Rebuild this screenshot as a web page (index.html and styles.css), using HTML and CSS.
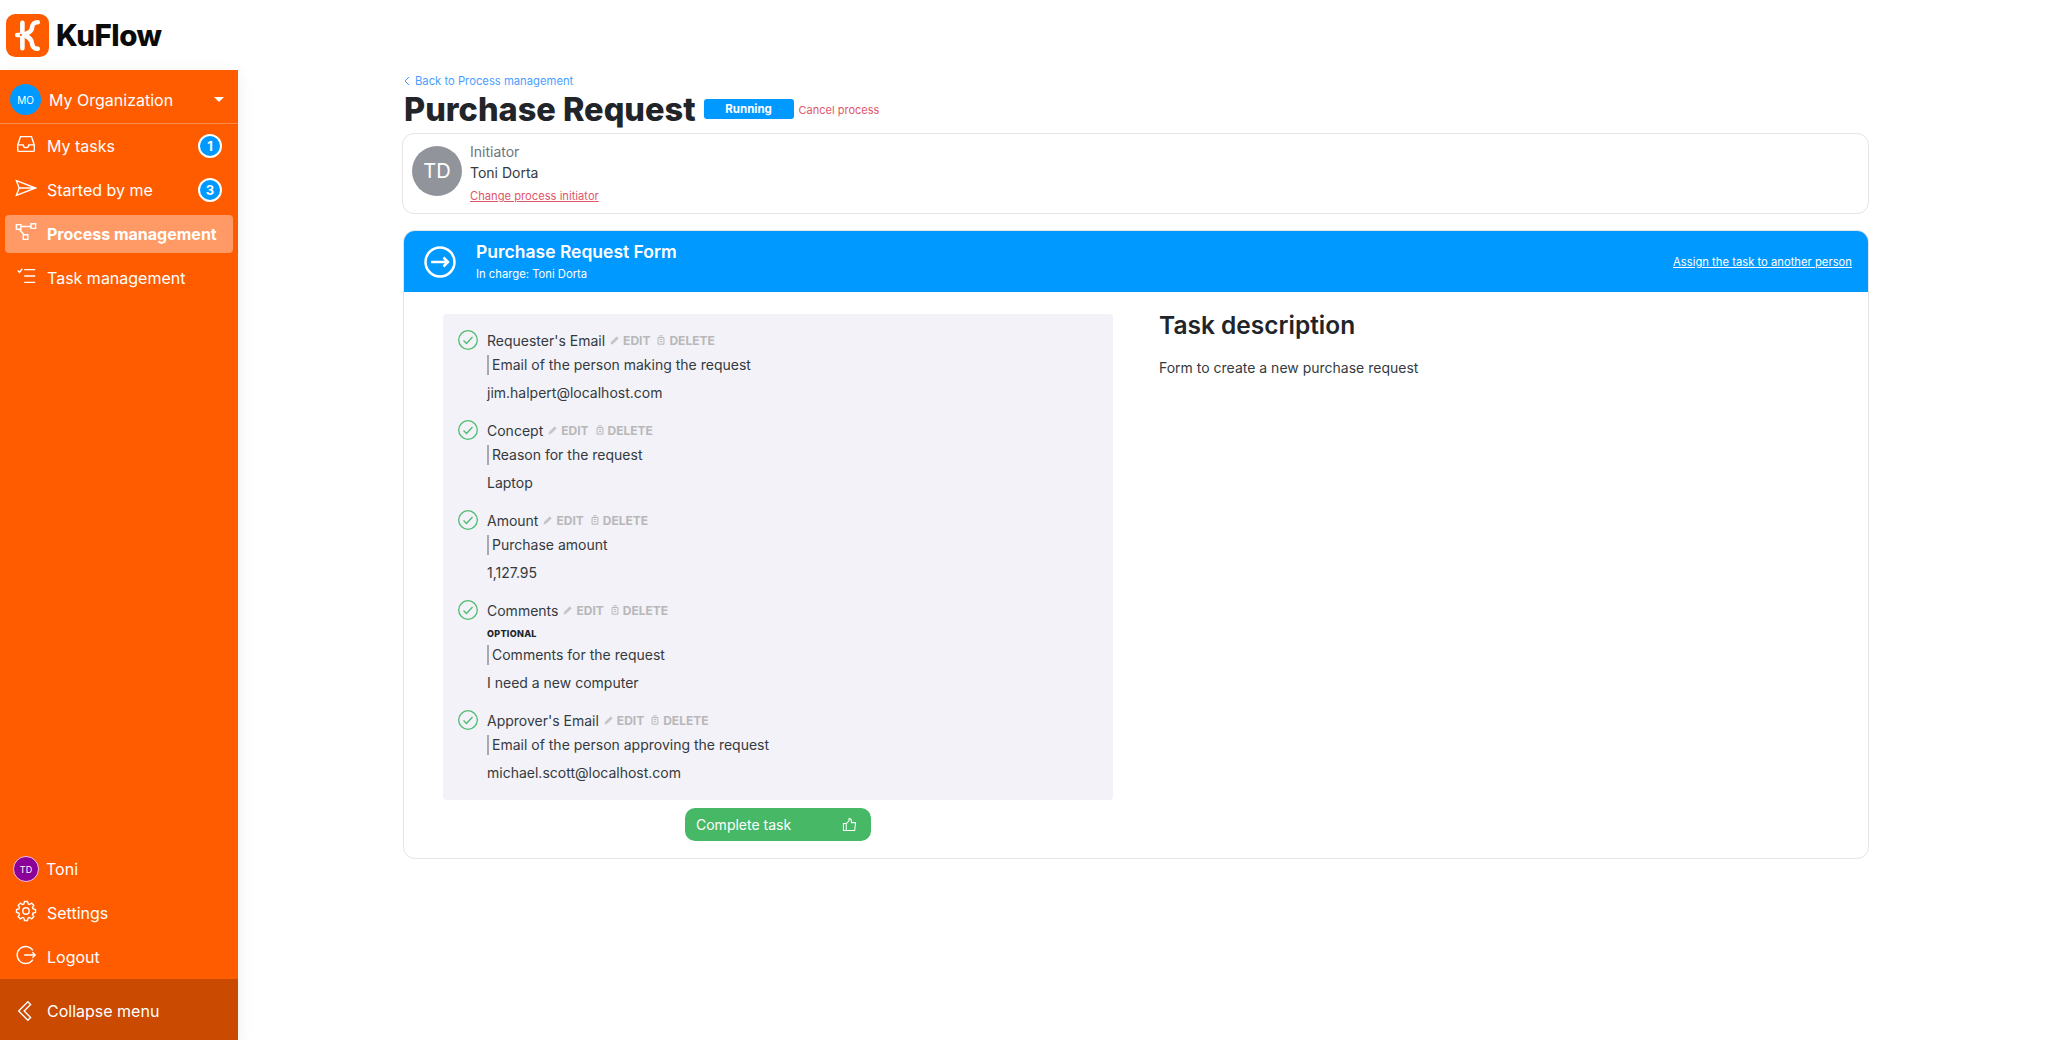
FILE: index.html
```html
<!DOCTYPE html>
<html lang="en">
<head>
<meta charset="utf-8">
<title>KuFlow</title>
<link rel="stylesheet" href="styles.css">
</head>
<body>
<div class="app">
  <aside class="side">
    <div class="brand">
      <svg class="logo" viewBox="0 0 42 42"><rect width="42" height="42" rx="9" fill="#ff5c00"/><path d="M16 8.500v25M31 8c-6 0-5 4-6 7-1 3-5 4-7 5.500 2 1.500 6 2.500 7 6.500 1 3 0 7 6 7M11 20.500h5" fill="none" stroke="#fff" stroke-width="4.500" stroke-linecap="round"/><circle cx="14.500" cy="20.500" r="1.100" fill="#ff5c00"/></svg>
      <span class="brand-name">KuFlow</span>
    </div>
    <nav class="menu">
      <div class="org"><span class="org-av">MO</span><span class="org-name">My Organization</span><span class="caret"></span></div>
      <div class="nav-list">
        <a class="nav"><svg class="ico" viewBox="0 0 24 24"><path d="M6 4h12l3 9v6a1 1 0 0 1-1 1H4a1 1 0 0 1-1-1v-6zM3 13h6c0 2 1.500 3 3 3s3-1 3-3h6"/></svg><span class="lbl">My tasks</span><span class="count">1</span></a>
        <a class="nav"><svg class="ico" viewBox="0 0 24 24"><path d="M1.500 4l21 8-21 8 3-8-3-8zM4.500 12h18"/></svg><span class="lbl">Started by me</span><span class="count">3</span></a>
        <a class="nav active"><svg class="ico" viewBox="0 0 24 24"><path d="M1.500 4h5v5h-5zM17.500 3h5v5h-5zM9 15h5v5H9zM6.500 6h11M4.500 9l5.500 6"/></svg><span class="lbl">Process management</span></a>
        <a class="nav"><svg class="ico" viewBox="0 0 24 24"><path d="M10 5h12M10 12h12M10 19h12M3 6l2 2 3-4"/></svg><span class="lbl">Task management</span></a>
      </div>
      <div class="nav-list bottom">
        <a class="nav"><span class="user-av">TD</span><span class="lbl">Toni</span></a>
        <a class="nav"><svg class="ico" viewBox="0 0 24 24"><circle cx="12" cy="12" r="3.500"/><path d="M19.650 9.660 22.370 10.360 22.370 13.640 19.650 14.340 19.060 15.760 20.490 18.170 18.170 20.490 15.760 19.060 14.340 19.650 13.640 22.370 10.360 22.370 9.660 19.650 8.240 19.060 5.830 20.490 3.510 18.170 4.940 15.760 4.350 14.340 1.630 13.640 1.630 10.360 4.350 9.660 4.940 8.240 3.510 5.830 5.830 3.510 8.240 4.940 9.660 4.350 10.360 1.630 13.640 1.630 14.340 4.350 15.760 4.940 18.170 3.510 20.490 5.830 19.060 8.240z"/></svg><span class="lbl">Settings</span></a>
        <a class="nav"><svg class="ico" viewBox="0 0 24 24"><path d="M19.500 7a9.300 9.300 0 1 0 0 10M10 12h12M19 9l3 3-3 3"/></svg><span class="lbl">Logout</span></a>
      </div>
      <a class="collapse"><svg class="ico" viewBox="0 0 24 24"><path d="M14 2l3 3-7 7 7 7-3 3-10-10z"/></svg><span class="lbl">Collapse menu</span></a>
    </nav>
  </aside>

  <main class="main">
    <a class="back"><svg class="chev" viewBox="0 0 8 10"><path d="M6 1L2 5l4 4"/></svg>Back to Process management</a>
    <div class="title-row">
      <h1 class="title">Purchase Request</h1>
      <span class="badge">Running</span>
      <a class="cancel">Cancel process</a>
    </div>
    <section class="initiator">
      <div class="ini-av">TD</div>
      <div class="ini-text">
        <div class="ini-label">Initiator</div>
        <div class="ini-name">Toni Dorta</div>
        <a class="ini-change">Change process initiator</a>
      </div>
    </section>
    <section class="task">
      <header class="task-head">
        <svg class="task-ico" viewBox="0 0 32 32"><circle cx="16" cy="16" r="14.500"/><path d="M7 16h17M19.500 11.500l4.500 4.500-4.500 4.500"/></svg>
        <div class="task-titles">
          <div class="task-name">Purchase Request Form</div>
          <div class="task-charge">In charge: Toni Dorta</div>
        </div>
        <a class="assign">Assign the task to another person</a>
      </header>
      <div class="task-body">
        <div class="form-col">
          <div class="panel">
            <div class="field">
              <svg class="check" viewBox="0 0 20 20"><circle cx="10" cy="10" r="9.300"/><path d="M5.500 10.500l3 3 6-6.500"/></svg>
              <div class="field-main">
                <div class="field-head"><span class="fname">Requester's Email</span><span class="act"><svg class="mini pen" viewBox="0 0 12 12"><path d="M1 11l1-3 6-6 2 2-6 6z"/></svg>EDIT</span><span class="act"><svg class="mini" viewBox="0 0 12 12"><path d="M2.500 3h7v8h-7zM4 1h4M4.500 5.500h3M4.500 8h3"/></svg>DELETE</span></div>
                <div class="hint">Email of the person making the request</div>
                <div class="value">jim.halpert@localhost.com</div>
              </div>
            </div>
            <div class="field">
              <svg class="check" viewBox="0 0 20 20"><circle cx="10" cy="10" r="9.300"/><path d="M5.500 10.500l3 3 6-6.500"/></svg>
              <div class="field-main">
                <div class="field-head"><span class="fname">Concept</span><span class="act"><svg class="mini pen" viewBox="0 0 12 12"><path d="M1 11l1-3 6-6 2 2-6 6z"/></svg>EDIT</span><span class="act"><svg class="mini" viewBox="0 0 12 12"><path d="M2.500 3h7v8h-7zM4 1h4M4.500 5.500h3M4.500 8h3"/></svg>DELETE</span></div>
                <div class="hint">Reason for the request</div>
                <div class="value">Laptop</div>
              </div>
            </div>
            <div class="field">
              <svg class="check" viewBox="0 0 20 20"><circle cx="10" cy="10" r="9.300"/><path d="M5.500 10.500l3 3 6-6.500"/></svg>
              <div class="field-main">
                <div class="field-head"><span class="fname">Amount</span><span class="act"><svg class="mini pen" viewBox="0 0 12 12"><path d="M1 11l1-3 6-6 2 2-6 6z"/></svg>EDIT</span><span class="act"><svg class="mini" viewBox="0 0 12 12"><path d="M2.500 3h7v8h-7zM4 1h4M4.500 5.500h3M4.500 8h3"/></svg>DELETE</span></div>
                <div class="hint">Purchase amount</div>
                <div class="value">1,127.95</div>
              </div>
            </div>
            <div class="field">
              <svg class="check" viewBox="0 0 20 20"><circle cx="10" cy="10" r="9.300"/><path d="M5.500 10.500l3 3 6-6.500"/></svg>
              <div class="field-main">
                <div class="field-head"><span class="fname">Comments</span><span class="act"><svg class="mini pen" viewBox="0 0 12 12"><path d="M1 11l1-3 6-6 2 2-6 6z"/></svg>EDIT</span><span class="act"><svg class="mini" viewBox="0 0 12 12"><path d="M2.500 3h7v8h-7zM4 1h4M4.500 5.500h3M4.500 8h3"/></svg>DELETE</span></div>
                <div class="optional">OPTIONAL</div>
                <div class="hint">Comments for the request</div>
                <div class="value">I need a new computer</div>
              </div>
            </div>
            <div class="field">
              <svg class="check" viewBox="0 0 20 20"><circle cx="10" cy="10" r="9.300"/><path d="M5.500 10.500l3 3 6-6.500"/></svg>
              <div class="field-main">
                <div class="field-head"><span class="fname">Approver's Email</span><span class="act"><svg class="mini pen" viewBox="0 0 12 12"><path d="M1 11l1-3 6-6 2 2-6 6z"/></svg>EDIT</span><span class="act"><svg class="mini" viewBox="0 0 12 12"><path d="M2.500 3h7v8h-7zM4 1h4M4.500 5.500h3M4.500 8h3"/></svg>DELETE</span></div>
                <div class="hint">Email of the person approving the request</div>
                <div class="value">michael.scott@localhost.com</div>
              </div>
            </div>
          </div>
          <button class="complete"><span>Complete task</span><svg class="thumb" viewBox="0 0 16 16"><path d="M1.500 7h3v7.500h-3zM4.500 7l3-3V1.500c1.500 0 2.500 1 2.500 2.500v2h4.500l-1 8.500h-9"/></svg></button>
        </div>
        <div class="desc-col">
          <h2 class="desc-title">Task description</h2>
          <p class="desc-text">Form to create a new purchase request</p>
        </div>
      </div>
    </section>
  </main>
</div>
</body>
</html>
```
FILE: styles.css
```css
* { box-sizing: border-box; }
html, body { margin: 0; height: 100%; }
body { font-family: Inter, "Liberation Sans", sans-serif; color: #212529; background: #fff; font-size: 14px; }
a { text-decoration: none; }
.app { display: flex; height: 1040px; overflow: hidden; }

.side { width: 238px; flex: none; display: flex; flex-direction: column; }
.brand { height: 70px; display: flex; align-items: center; gap: 7px; padding-left: 6px; }
.logo { width: 43px; height: 43px; }
.brand-name { font-size: 29.500px; font-weight: 800; color: #0b0b0b; letter-spacing: -0.5px; }
.menu { flex: 1; background: #ff5c00; color: #fff; display: flex; flex-direction: column; box-shadow: 0 4px 16px rgba(0, 0, 0, 0.08); }
.org { height: 54px; display: flex; align-items: center; padding: 6px 14px 0 10px; border-bottom: 1px solid #ff8a47; font-size: 16px; }
.org-av { width: 31px; height: 31px; border-radius: 50%; background: #0099ff; font-size: 10px; display: flex; align-items: center; justify-content: center; margin-right: 8px; }
.org-name { flex: 1; }
.caret { border: 5px solid transparent; border-top: 5px solid #fff; border-bottom: 0; }
.nav-list { padding: 0 5px; display: flex; flex-direction: column; gap: 6px; margin-top: 3px; }
.nav { height: 38px; display: flex; align-items: center; border-radius: 4px; padding: 0 10px; font-size: 16px; color: #fff; }
.nav.active { background: #ff9966; font-weight: 700; }
.ico { width: 22px; height: 22px; margin-right: 10px; fill: none; stroke: #fff; stroke-width: 1.500; flex: none; position: relative; top: -2px; }
.lbl { flex: 1; white-space: nowrap; }
.count { width: 24px; height: 24px; border-radius: 50%; background: #0099ff; border: 2px solid #fff; font-size: 13px; font-weight: 700; display: flex; align-items: center; justify-content: center; margin-right: 1px; }
.bottom { margin-top: auto; margin-bottom: 3px; }
.user-av { width: 26px; height: 26px; margin: 0 7px 0 -2px; border-radius: 50%; background: #8b0099; border: 1px solid #f0c0e0; font-size: 9px; display: flex; align-items: center; justify-content: center; flex: none; }
.collapse { height: 61px; background: #c94a00; display: flex; align-items: center; padding: 2px 0 0 15px; font-size: 16px; color: #fff; }
.collapse .ico { top: 0; }

.main { flex: 1; padding: 73px 179px 0 164px; min-width: 0; }
.back { display: flex; align-items: center; font-size: 11.250px; line-height: 16px; color: #4a9eff; margin-left: 1px; }
.chev { width: 8px; height: 10px; margin-right: 4px; fill: none; stroke: #4a9eff; stroke-width: 1; }
.title-row { display: flex; align-items: center; height: 36px; margin-top: 3px; }
.title { font-size: 32.500px; font-weight: 800; margin: 0 8px 0 2px; line-height: 36px; }
.badge { width: 90px; height: 20px; border-radius: 3px; background: #0099ff; color: #fff; font-size: 11.500px; font-weight: 700; display: flex; align-items: center; justify-content: center; margin-right: 5px; position: relative; top: -1px; }
.cancel { font-size: 11px; color: #e0566a; }

.initiator { margin-top: 5px; height: 81px; border: 1px solid #e4e4e4; border-radius: 12px; display: flex; padding: 12px 9px; }
.ini-av { width: 50px; height: 50px; border-radius: 50%; background: #92949c; color: #fff; font-size: 20px; display: flex; align-items: center; justify-content: center; margin-right: 8px; }
.ini-label { font-size: 14px; line-height: 18px; color: #6c757d; margin-top: -3px; }
.ini-name { font-size: 14px; line-height: 24px; color: #343a40; }
.ini-change { display: block; font-size: 11.200px; line-height: 16px; color: #e0566a; text-decoration: underline; margin-top: 3px; }

.task { margin: 16px 0 0 1px; height: 629px; border: 1px solid #e4e4e4; border-radius: 12px; overflow: hidden; }
.task-head { height: 61px; background: #0099ff; color: #fff; display: flex; align-items: center; padding: 0 16px 0 20px; }
.task-ico { width: 32px; height: 32px; fill: none; stroke: #fff; stroke-width: 2.500; margin-right: 20px; }
.task-titles { flex: 1; }
.task-name { font-size: 17.500px; font-weight: 600; line-height: 24px; }
.task-charge { font-size: 11.250px; line-height: 20px; }
.assign { font-size: 11.250px; color: #fff; text-decoration: underline; }
.task-body { display: flex; padding: 22px 39px 0; gap: 46px; }
.form-col { width: 670px; flex: none; display: flex; flex-direction: column; align-items: center; }
.panel { width: 100%; background: #f2f2f8; border-radius: 4px; padding: 16px 16px 17px 15px; }
.field { display: flex; margin-bottom: 17px; }
.field:last-child { margin-bottom: 0; }
.check { width: 20px; height: 20px; fill: none; stroke: #4fbb6e; stroke-width: 1.300; margin-right: 9px; flex: none; }
.field-head { display: flex; align-items: center; height: 20px; font-size: 14px; }
.fname { margin-right: 5px; color: #343a40; }
.act { font-size: 12px; font-weight: 700; color: #b8b8b8; margin-right: 6px; display: flex; align-items: center; }
.mini { width: 10px; height: 10px; fill: none; stroke: #b8b8b8; stroke-width: 1.200; margin-right: 3px; }
.pen { fill: #c4c4c4; stroke-width: 0.500; }
.optional { font-size: 9px; font-weight: 800; line-height: 12px; margin: 8px 0 2px; letter-spacing: 0.3px; }
.hint { margin-top: 5px; border-left: 2px solid #a9a9b0; padding-left: 3px; font-size: 14px; line-height: 20px; color: #343a40; }
.value { margin-top: 8px; font-size: 14px; line-height: 20px; color: #343a40; }
.complete { width: 186px; height: 33px; margin-top: 8px; border: 0; border-radius: 10px; background: #46b866; color: #fff; display: flex; align-items: center; justify-content: space-between; padding: 0 14px 0 11px; font: 14px Inter, "Liberation Sans", sans-serif; }
.thumb { width: 15px; height: 15px; fill: none; stroke: #fff; stroke-width: 1.100; }
.desc-col { flex: 1; margin-top: -3px; }
.desc-title { font-size: 24.500px; font-weight: 600; line-height: 29px; margin: 0; }
.desc-text { font-size: 14px; line-height: 20px; margin: 18px 0 0; color: #343a40; }
```
